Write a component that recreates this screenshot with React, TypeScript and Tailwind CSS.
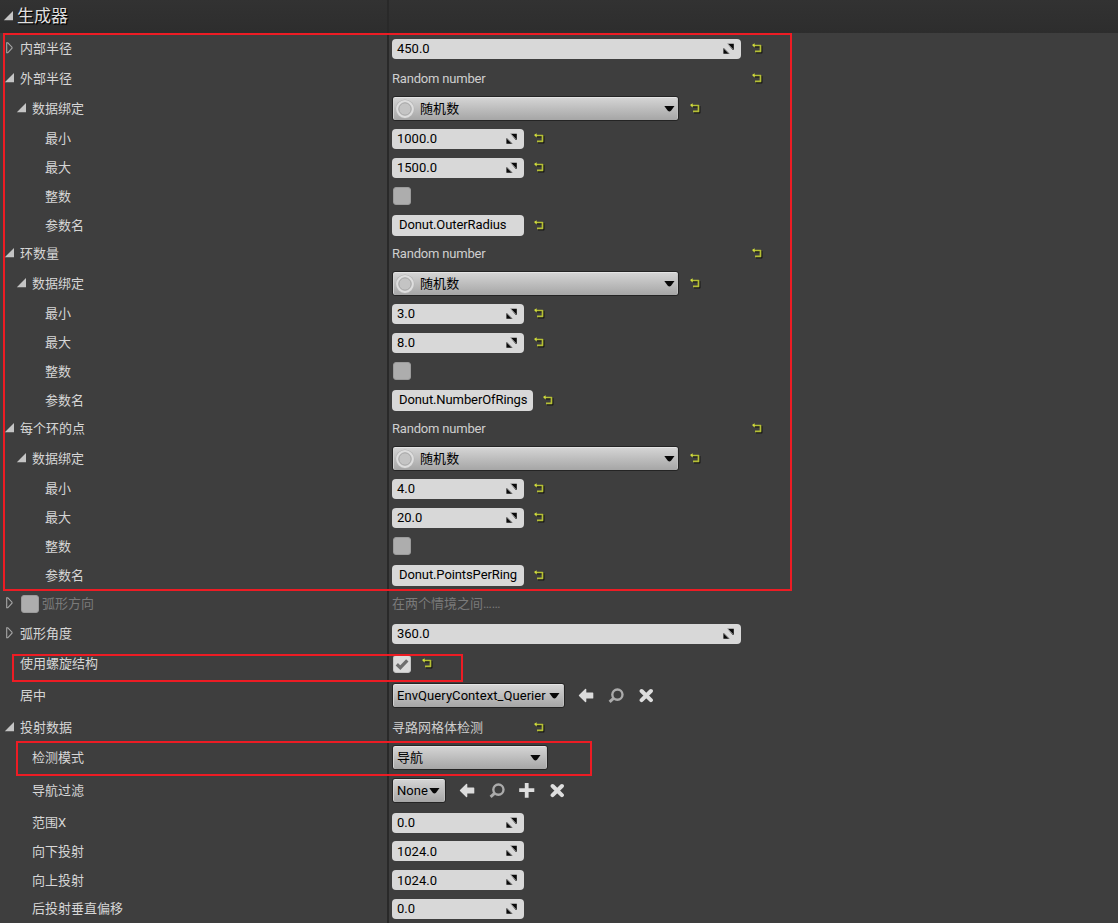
import React from "react";

type Arrow = "open" | "closed";

function OpenArrow() {
  return (
    <svg width="10" height="10" viewBox="0 0 10 10" className="shrink-0">
      <path d="M10 0V9.2H0.8Z" fill="#c4c4c4" />
    </svg>
  );
}

function ClosedArrow() {
  return (
    <svg width="8" height="12" viewBox="0 0 8 12" className="shrink-0">
      <path d="M1.7 0.8V10.8H2.8L7 6.2V5.2L2.8 0.8Z" fill="none" stroke="#a6a6a6" strokeWidth="1.1" />
    </svg>
  );
}

function Reset() {
  return (
    <svg width="11" height="11" viewBox="0 0 11 11" className="mt-[9px] shrink-0">
      <path d="M3 3.6H9.6V9.6H4" fill="none" stroke="#171717" strokeWidth="1.8" strokeLinejoin="round" />
      <path d="M1.2 2.5H8.5V8.4H3" fill="none" stroke="#b5bf35" strokeWidth="1.7" strokeLinejoin="round" />
      <path d="M0 2.1L2.6 0.2V4.4Z" fill="#d3df3c" />
    </svg>
  );
}

function Spin({ value, wide, low }: { value: string; wide?: boolean; low?: boolean }) {
  return (
    <div
      className={`mt-[5px] flex h-5 shrink-0 items-center justify-between rounded-[4px] bg-[#d8d8d8] pl-[5px] pr-[6px] text-black ${wide ? "w-[349px]" : "w-[132px]"}`}
    >
      <span className={`leading-5 ${low ? "pt-[2px]" : ""}`}>{value}</span>
      <svg width="12" height="12" viewBox="0 0 12 12">
        <path d="M4.6 0.8H10.8V6.8H9.6Z M0.4 5L6.4 10.8H0.4Z" fill="#0a0a0a" />
        <path d="M4.8 0.8L10 6.3M0.6 5L6.2 10.8" stroke="#8a8a8a" strokeWidth="1" />
      </svg>
    </div>
  );
}

function NameBox({ value, width }: { value: string; width: string }) {
  return (
    <div className={`mt-1 h-[21px] shrink-0 rounded-[4px] bg-[#d8d8d8] pl-[7px] leading-[20px] tracking-[-0.1px] text-black ${width}`}>
      {value}
    </div>
  );
}

function Combo({ text, width, circle, end = "pr-[4px]" }: { text: string; width: string; circle?: boolean; end?: string }) {
  return (
    <div
      className={`mt-[2px] flex h-[25px] shrink-0 items-center justify-between rounded-[3px] border border-[#242424] bg-linear-to-b from-[#d6d6d6] to-[#a6a6a6] text-black shadow-[inset_0_1px_0_#e4e4e4,inset_1px_0_0_#d2d2d2,inset_-1px_0_0_#c0c0c0] ${circle ? "pl-[2px]" : "pl-[4px]"} ${end} ${width}`}
    >
      <span className="flex items-center gap-[5px] leading-[23px] tracking-[0.07px]">
        {circle && (
          <svg width="20" height="20" viewBox="0 0 20 20">
            <circle cx="10" cy="10" r="9.5" fill="#b4b4b4" />
            <circle cx="10" cy="10" r="7.7" fill="#c4c4c4" stroke="#dedede" strokeWidth="2.4" />
            <circle cx="10" cy="10" r="6.2" fill="none" stroke="#a2a2a2" strokeWidth="0.9" />
          </svg>
        )}
        {text}
      </span>
      <svg width="11" height="7" viewBox="0 0 11 7">
        <path d="M0.3 1H10.5L7 5.8Q5.4 7 3.8 5.8Z" fill="#080808" />
      </svg>
    </div>
  );
}

function Check({ checked }: { checked?: boolean }) {
  return (
    <div
      className={`ml-px flex h-[18px] w-[18px] shrink-0 items-center justify-center rounded-[3px] border ${checked ? "mt-[6px] border-[#c4c4c4] bg-[#dadada]" : "mt-[5px] border-[#9b9b9b] bg-[#adadad]"}`}
    >
      {checked && (
        <svg width="14" height="14" viewBox="0 0 14 14" className="shrink-0">
          <path d="M1.8 7.3L5.3 10.6L12.3 3.4" fill="none" stroke="#6e6e6e" strokeWidth="3.3" />
        </svg>
      )}
    </div>
  );
}

function BackIcon() {
  return (
    <svg width="16" height="16" viewBox="0 0 16 16" className="mt-[7px] shrink-0">
      <path d="M1.5 7.5L7.6 1.6V5.3H14.6V9.9H7.6V13.6Z" fill="#dcdcdc" stroke="#dcdcdc" strokeWidth="1.4" strokeLinejoin="round" />
    </svg>
  );
}

function SearchIcon() {
  return (
    <svg width="16" height="16" viewBox="0 0 16 16" className="mt-[7px] shrink-0">
      <circle cx="9.4" cy="6.6" r="5.1" fill="none" stroke="#ababab" strokeWidth="2.4" />
      <path d="M5.8 10.2L1.6 13.8" stroke="#ababab" strokeWidth="3" />
    </svg>
  );
}

function PlusIcon() {
  return (
    <svg width="16" height="16" viewBox="0 0 16 16" className="mt-[7px] shrink-0">
      <path d="M7.7 1.6V12.9M2.1 7.2H13.4" stroke="#dedede" strokeWidth="3.8" strokeLinecap="square" strokeLinejoin="round" />
    </svg>
  );
}

function CloseIcon() {
  return (
    <svg width="14" height="16" viewBox="0 0 14 16" className="mt-[7px] shrink-0">
      <path d="M2.6 3L11.9 12.2M11.9 3L2.6 12.2" stroke="#dedede" strokeWidth="4" strokeLinecap="round" />
    </svg>
  );
}

function Row({
  label,
  indent,
  arrow,
  height = "h-[30px]",
  muted,
  checkbox,
  children,
}: {
  label: string;
  indent: string;
  arrow?: Arrow;
  height?: string;
  muted?: boolean;
  checkbox?: boolean;
  children?: React.ReactNode;
}) {
  return (
    <div className={`flex shrink-0 items-start ${height}`}>
      <div className={`flex w-[392px] shrink-0 items-start leading-[29px] ${indent} ${muted ? "text-[#7a7a7a]" : "text-[#d6d6d6]"}`}>
        {arrow === "open" && (
          <span className="mr-[6px] flex h-[27px] items-center">
            <OpenArrow />
          </span>
        )}
        {arrow === "closed" && (
          <span className="mr-[7px] flex h-[27px] items-center">
            <ClosedArrow />
          </span>
        )}
        {checkbox && (
          <span className="mr-[3px] pt-px">
            <Check />
          </span>
        )}
        <span>{label}</span>
      </div>
      {children}
    </div>
  );
}

function Plain({ text, width, muted }: { text: string; width: string; muted?: boolean }) {
  return <span className={`shrink-0 leading-[29px] ${width} ${muted ? "text-[#7a7a7a]" : "text-[#cfcfcf]"}`}>{text}</span>;
}

const Gap = ({ w }: { w: string }) => <span className={`shrink-0 ${w}`} />;

const groups = [
  { label: "外部半径", min: "1000.0", max: "1500.0", name: "Donut.OuterRadius", width: "w-[132px]" },
  { label: "环数量", min: "3.0", max: "8.0", name: "Donut.NumberOfRings", width: "w-[141px]" },
  { label: "每个环的点", min: "4.0", max: "20.0", name: "Donut.PointsPerRing", width: "w-[132px]" },
];

export default function App() {
  return (
    <div className="relative h-[923px] w-[1118px] overflow-hidden whitespace-nowrap bg-[#3e3e3e] font-[Roboto,'Noto_Sans_CJK_SC',sans-serif] text-[13px]">
      <div className="absolute left-[387px] top-0 z-10 h-full w-[2px] bg-[#292929]" />
      <div className="flex h-full flex-col">
        <div className="flex h-[33px] shrink-0 items-start bg-linear-to-b from-[#323232] to-[#2d2d2d] pl-[3px]">
          <span className="mt-[11px]">
            <OpenArrow />
          </span>
          <span className="ml-1 text-[17px] leading-[32px] text-[#e0e0e0] [text-shadow:1px_1px_1px_#000,1px_1px_0_#000]">生成器</span>
        </div>
        <div className="h-px shrink-0" />

        <Row label="内部半径" indent="pl-[5px]" arrow="closed">
          <Spin value="450.0" wide />
          <Gap w="w-[11px]" />
          <Reset />
        </Row>

        {groups.map((g) => (
          <React.Fragment key={g.label}>
            <Row label={g.label} indent="pl-1" arrow="open">
              <Plain text="Random number" width="w-[360px] tracking-[-0.2px]" />
              <Reset />
            </Row>
            <Row label="数据绑定" indent="pl-4" arrow="open">
              <Combo text="随机数" width="w-[287px]" circle end="pr-[3px]" />
              <Gap w="w-[11px]" />
              <Reset />
            </Row>
            <Row label="最小" indent="pl-[45px]" height="h-[29px]">
              <Spin value={g.min} />
              <Gap w="w-[10px]" />
              <Reset />
            </Row>
            <Row label="最大" indent="pl-[45px]" height="h-[29px]">
              <Spin value={g.max} />
              <Gap w="w-[10px]" />
              <Reset />
            </Row>
            <Row label="整数" indent="pl-[45px]" height="h-[29px]">
              <Check />
            </Row>
            <Row label="参数名" indent="pl-[45px]" height="h-[28px]">
              <NameBox value={g.name} width={g.width} />
              <Gap w="w-[10px]" />
              <Reset />
            </Row>
          </React.Fragment>
        ))}

        <Row label="弧形方向" indent="pl-[5px]" arrow="closed" muted checkbox>
          <Plain text="在两个情境之间……" width="w-[200px]" muted />
        </Row>
        <Row label="弧形角度" indent="pl-[5px]" arrow="closed">
          <Spin value="360.0" wide />
        </Row>
        <Row label="使用螺旋结构" indent="pl-5">
          <Check checked />
          <Gap w="w-[11px]" />
          <Reset />
        </Row>
        <Row label="居中" indent="pl-5" height="h-[32px] pt-[2px]">
          <Combo text="EnvQueryContext_Querier" width="w-[173px]" />
          <Gap w="w-[13px]" />
          <BackIcon />
          <Gap w="w-[14px]" />
          <SearchIcon />
          <Gap w="w-[15px]" />
          <CloseIcon />
        </Row>
        <Row label="投射数据" indent="pl-1" arrow="open" height="h-[32px] pt-[2px]">
          <Plain text="寻路网格体检测" width="w-[142px]" />
          <Reset />
        </Row>
        <Row label="检测模式" indent="pl-8">
          <Combo text="导航" width="w-[156px]" end="pr-[6px]" />
        </Row>
        <Row label="导航过滤" indent="pl-8" height="h-[35px] pt-[3px]">
          <Combo text="None" width="w-[54px]" end="pr-[5px]" />
          <Gap w="w-[13px]" />
          <BackIcon />
          <Gap w="w-[14px]" />
          <SearchIcon />
          <Gap w="w-[14px]" />
          <PlusIcon />
          <Gap w="w-[15px]" />
          <CloseIcon />
        </Row>
        <Row label="范围X" indent="pl-8" height="h-[28px]">
          <Spin value="0.0" />
        </Row>
        <Row label="向下投射" indent="pl-8 pt-px" height="h-[29px]">
          <Spin value="1024.0" low />
        </Row>
        <Row label="向上投射" indent="pl-8 pt-px" height="h-[29px]">
          <Spin value="1024.0" low />
        </Row>
        <Row label="后投射垂直偏移" indent="pl-8" height="h-[29px]">
          <Spin value="0.0" />
        </Row>
      </div>

      <div className="absolute left-[3px] top-[33px] z-20 h-[558px] w-[789px] border-2 border-[#ed1c24]" />
      <div className="absolute left-[12px] top-[654px] z-20 h-[28px] w-[451px] border-2 border-[#ed1c24]" />
      <div className="absolute left-[16px] top-[741px] z-20 h-[35px] w-[576px] border-2 border-[#ed1c24]" />
    </div>
  );
}
